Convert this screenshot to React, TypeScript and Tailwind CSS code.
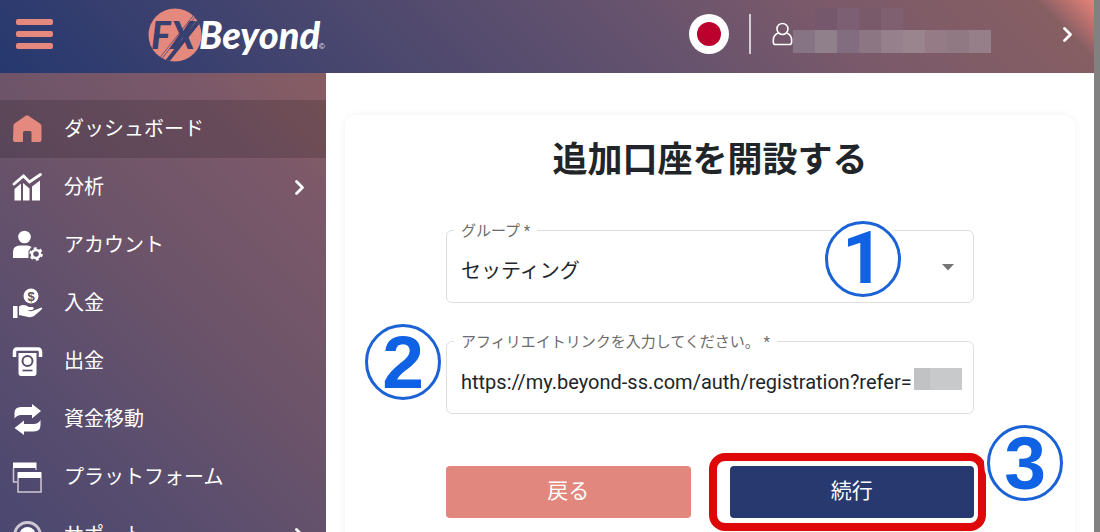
import type { ReactNode } from "react";

const navy = "#37406f";

function Logo() {
  return (
    <svg width="180" height="60" viewBox="0 0 180 60" aria-label="FXBeyond" role="img">
      <defs>
        <clipPath id="disc"><circle cx="28" cy="31" r="26.500" /></clipPath>
      </defs>
      <circle cx="28" cy="31" r="26.500" fill="#e5897f" />
      <text x="4" y="44.500" fontFamily="Lato" fontWeight="900" fontStyle="italic" fontSize="37" fill={navy}>FX</text>
      <g clipPath="url(#disc)" stroke={navy}>
        <path d="M56 12 L18 60" strokeWidth="4" />
        <path d="M47.500 10 L13 53.500 M49.500 11 L15 54.500" strokeWidth="0.700" />
      </g>
      <text x="52" y="45" fontFamily="Lato" fontWeight="900" fontStyle="italic" fontSize="38" fill="#fff">Beyond</text>
      <text x="172" y="45" fontFamily="Liberation Sans" fontSize="8" fill="#fff">©</text>
    </svg>
  );
}

function Chevron() {
  return (
    <svg width="12" height="18" viewBox="0 0 12 18" fill="none" stroke="#fff" strokeWidth="2.800" strokeLinecap="round" strokeLinejoin="round">
      <path d="M2.500 3.500 L8.500 9.500 L2.500 15.500" />
    </svg>
  );
}

const icons: Record<string, ReactNode> = {
  home: <path d="M1.500 12 Q1 10.500 2.500 9.500 L14 1.500 Q15 1 16 1.500 L28 9.500 Q29.500 10.500 29.500 12 V26 Q29.500 28 27.500 28 H19.500 V18.500 Q19.500 17 18 17 H12.500 Q11 17 11 18.500 V28 H3 Q1 28 1 26 Z" fill="#e5897f" />,
  chart: (
    <g fill="#fff">
      <path d="M2 12 L11.500 4 L17.500 10 L28.500 2.500" fill="none" stroke="#fff" strokeWidth="2.800" strokeLinecap="round" />
      <path d="M2.500 17 L9 11.500 V28.500 H2.500Z M11 11 L17.500 16.500 V28.500 H11Z M20 14.500 L28 8.500 V28.500 H20Z" />
    </g>
  ),
  account: (
    <g fill="#fff">
      <circle cx="12.500" cy="7" r="6.300" />
      <path d="M1 28 V22 Q1 15.500 8 15.500 H15 Q18 15.500 19.500 17 L16.500 21 V28Z" />
      <circle cx="24" cy="24" r="4" fill="none" stroke="#fff" strokeWidth="2.500" />
      <circle cx="24" cy="24" r="5.800" fill="none" stroke="#fff" strokeWidth="2" strokeDasharray="3 3.070" />
    </g>
  ),
  deposit: (
    <g fill="#fff">
      <circle cx="19" cy="8" r="7.500" />
      <text x="19" y="12.500" textAnchor="middle" fontFamily="Liberation Sans" fontWeight="700" fontSize="13" fill="#5f506d">$</text>
      <path d="M1 18 H5.500 V30 H1Z M7 18.500 Q12 15.500 17 19 L21 19 Q23 21 20 22 L15 22.500 Q20 24 23 22 L29.500 19.500 Q31 20 29 22 L22 28 Q19 30 14 28.500 L7 27Z" />
    </g>
  ),
  withdraw: (
    <g fill="#fff">
      <path d="M2.500 11 V6 Q2.500 3 5 3 H26 Q28.500 3 28.500 6 V11" fill="none" stroke="#fff" strokeWidth="3.500" />
      <path d="M6.500 7 H24.500 V27 Q24.500 30 22 30 H9 Q6.500 30 6.500 27Z" />
      <circle cx="15.500" cy="15" r="5" fill="none" stroke="#5b4e6d" strokeWidth="2" />
      <path d="M10.500 24.500 H20.500" stroke="#5b4e6d" strokeWidth="1.700" />
    </g>
  ),
  transfer: (
    <g fill="#fff">
      <path d="M2.500 14.500 V9 Q2.500 3 9 3 H20 V0 L29 7 L20 14.500 V11 H9 Q5 11 2.500 14.500Z" />
      <path d="M28.500 16 V21 Q28.500 27.500 22 27.500 H12 V31 L2.500 24 L12 16.500 V20 H22 Q26 20 28.500 16Z" />
    </g>
  ),
  platform: (
    <g fill="none" stroke="#cfc8d3" strokeWidth="1.500">
      <path d="M5 20 H1.500 V6 M24 6 V8" />
      <rect x="6" y="11" width="23" height="19" />
      <path d="M1 0.500 H24.500 V6 H1Z M6 10 H29 V16 H6Z" fill="#fff" stroke="none" />
    </g>
  ),
  support: (
    <g>
      <circle cx="15.500" cy="15.500" r="13" fill="none" stroke="#cfc8d3" strokeWidth="3" />
      <circle cx="15.500" cy="15" r="8" fill="#fff" />
    </g>
  ),
};

const items = [
  { id: "home", label: "ダッシュボード", active: true },
  { id: "chart", label: "分析", more: true },
  { id: "account", label: "アカウント" },
  { id: "deposit", label: "入金" },
  { id: "withdraw", label: "出金" },
  { id: "transfer", label: "資金移動" },
  { id: "platform", label: "プラットフォーム" },
  { id: "support", label: "サポート", more: true },
];

function Step({ n, className, font }: { n: number; className: string; font: string }) {
  return (
    <span className={`pointer-events-none absolute flex size-[76px] items-center justify-center rounded-full border-3 border-[#1a62d6] bg-white text-[#0f62e3] ring-3 ring-white ${font} ${className}`}>
      {n}
    </span>
  );
}

export default function App() {
  return (
    <div className="flex h-screen flex-col overflow-hidden border-r-6 border-[#818181] bg-white font-['Roboto','Noto_Sans_CJK_JP',sans-serif]">
      <header className="flex h-[73px] shrink-0 items-center bg-[linear-gradient(45deg,#26386f_0%,#64526e_57%,#7a596a_75%,#865f63_95%,#e88279_100%)] pr-5 pb-1.5 pl-4">
        <button aria-label="メニュー" className="flex flex-col gap-1.5">
          <span className="h-1.5 w-[37px] rounded-xs bg-[#e5897f]" />
          <span className="h-1.5 w-[37px] rounded-xs bg-[#e5897f]" />
          <span className="h-1.5 w-[37px] rounded-xs bg-[#e5897f]" />
        </button>
        <a href="#" className="ml-[94px]"><Logo /></a>
        <button aria-label="日本語" className="ml-auto flex size-10 items-center justify-center rounded-full bg-white">
          <span className="size-6 rounded-full bg-[#bc002d]" />
        </button>
        <span className="ml-5 h-10 w-0.5 bg-[#d6ccd4]" />
        <button aria-label="ユーザー" className="ml-5 flex max-w-[303px] flex-1 items-center">
          <svg width="22" height="26" viewBox="0 0 24 26" fill="none" stroke="#fff" strokeWidth="1.700">
            <circle cx="12.500" cy="7.500" r="6" />
            <path d="M8 12 Q2.500 14 2.500 20 V22 Q2.500 24.500 5 24.500 H20 Q22.500 24.500 22.500 22 V20 Q22.500 14 17 12" />
          </svg>
          <span className="-mt-1.5 grid grid-cols-9">
            <span className="h-[22px] w-[22px]" />
            <span className="w-[22px] bg-[#75586b]" />
            <span className="w-[22px] bg-[#7d5f73]" />
            <span className="w-[22px] bg-[#785a6a]" />
            <span className="w-[22px] bg-[#7f6070]" />
            <span className="col-span-4" />
            <span className="h-[23px] bg-[#867484]" />
            <span className="bg-[#90808c]" />
            <span className="bg-[#826c80]" />
            <span className="bg-[#8c7684]" />
            <span className="bg-[#96808b]" />
            <span className="bg-[#9a848d]" />
            <span className="bg-[#947b85]" />
            <span className="bg-[#917984]" />
            <span className="bg-[#967f89]" />
          </span>
          <span className="ml-auto"><Chevron /></span>
        </button>
      </header>
      <div className="flex min-h-0 flex-1">
        <nav className="w-[326px] shrink-0 overflow-hidden bg-[linear-gradient(45deg,#4a4770_0%,#5b4e6e_28%,#6d5469_55%,#7a586a_80%,#875d62_100%)] pt-[27px]">
          {items.map((it) => (
            <a key={it.id} href="#" className={`flex h-[58px] items-center pr-5 pl-3 text-xl text-white ${it.active ? "bg-black/15" : ""}`}>
              <svg width="31" height="31" viewBox="0 0 31 31">{icons[it.id]}</svg>
              <span className="ml-[21px] flex-1">{it.label}</span>
              {it.more && <Chevron />}
            </a>
          ))}
        </nav>
        <main className="min-w-0 flex-1 px-[19px] pt-[42px]">
          <section className="rounded-xl px-5 pt-6 pb-10 shadow-[0_0_8px_rgba(0,0,0,0.06)]">
            <h1 className="text-center text-[35px] leading-[44px] font-bold text-[#212529]">追加口座を開設する</h1>
            <form className="mx-auto mt-[38px] max-w-[528px]">
              <div className="relative">
                <fieldset className="rounded-md border border-[#dedede] px-[7px]">
                  <legend className="px-[7px] pt-0.5 text-[15px] leading-4 text-[#6b6b6b]"><label htmlFor="group">グループ *</label></legend>
                  <div className="flex h-[63px] items-center pr-3 pl-[7px]">
                    <select id="group" className="flex-1 appearance-none bg-transparent text-xl text-[#212529]">
                      <option>セッティング</option>
                    </select>
                    <svg width="12" height="7" viewBox="0 0 12 7" className="-mt-1.5"><path d="M0 0H12L6 6.500Z" fill="#757575" /></svg>
                  </div>
                </fieldset>
                <Step n={1} className="top-0 right-[73px]" font="font-['Roboto'] font-bold text-[73px]" />
              </div>
              <div className="relative mt-[29px]">
                <fieldset className="rounded-md border border-[#dedede] px-[7px]">
                  <legend className="px-[7px] pt-0.5 text-[15px] leading-4 text-[#6b6b6b]"><label htmlFor="link">アフィリエイトリンクを入力してください。 *</label></legend>
                  <div className="flex h-[63px] items-center pr-1 pl-[7px]">
                    <input id="link" defaultValue="https://my.beyond-ss.com/auth/registration?refer=" className="min-w-0 flex-1 bg-transparent text-xl text-[#212529]" />
                    <span className="mb-1.5 h-[22px] w-4 bg-[#c1c2c4]" />
                    <span className="mb-1.5 h-[22px] w-8 bg-[#c8c9cb]" />
                  </div>
                </fieldset>
                <Step n={2} className="-top-2 -left-[81px]" font="font-['Liberation_Sans'] font-bold text-[75px]" />
              </div>
              <div className="relative mt-[52px] grid grid-cols-2 gap-[39px] text-[21px] text-white">
                <button type="button" className="h-[52px] rounded-sm bg-[#e2877e]">戻る</button>
                <div className="relative flex">
                  <button type="submit" className="h-[52px] flex-1 rounded-sm bg-[#28396f]">続行</button>
                  <span className="pointer-events-none absolute -top-[13px] -right-3 -bottom-[13px] -left-[21px] rounded-2xl border-8 border-[#df0808]" />
                </div>
                <Step n={3} className="-top-[41px] -right-[89px]" font="font-['Liberation_Sans'] font-bold text-[75px]" />
              </div>
            </form>
          </section>
        </main>
      </div>
    </div>
  );
}
